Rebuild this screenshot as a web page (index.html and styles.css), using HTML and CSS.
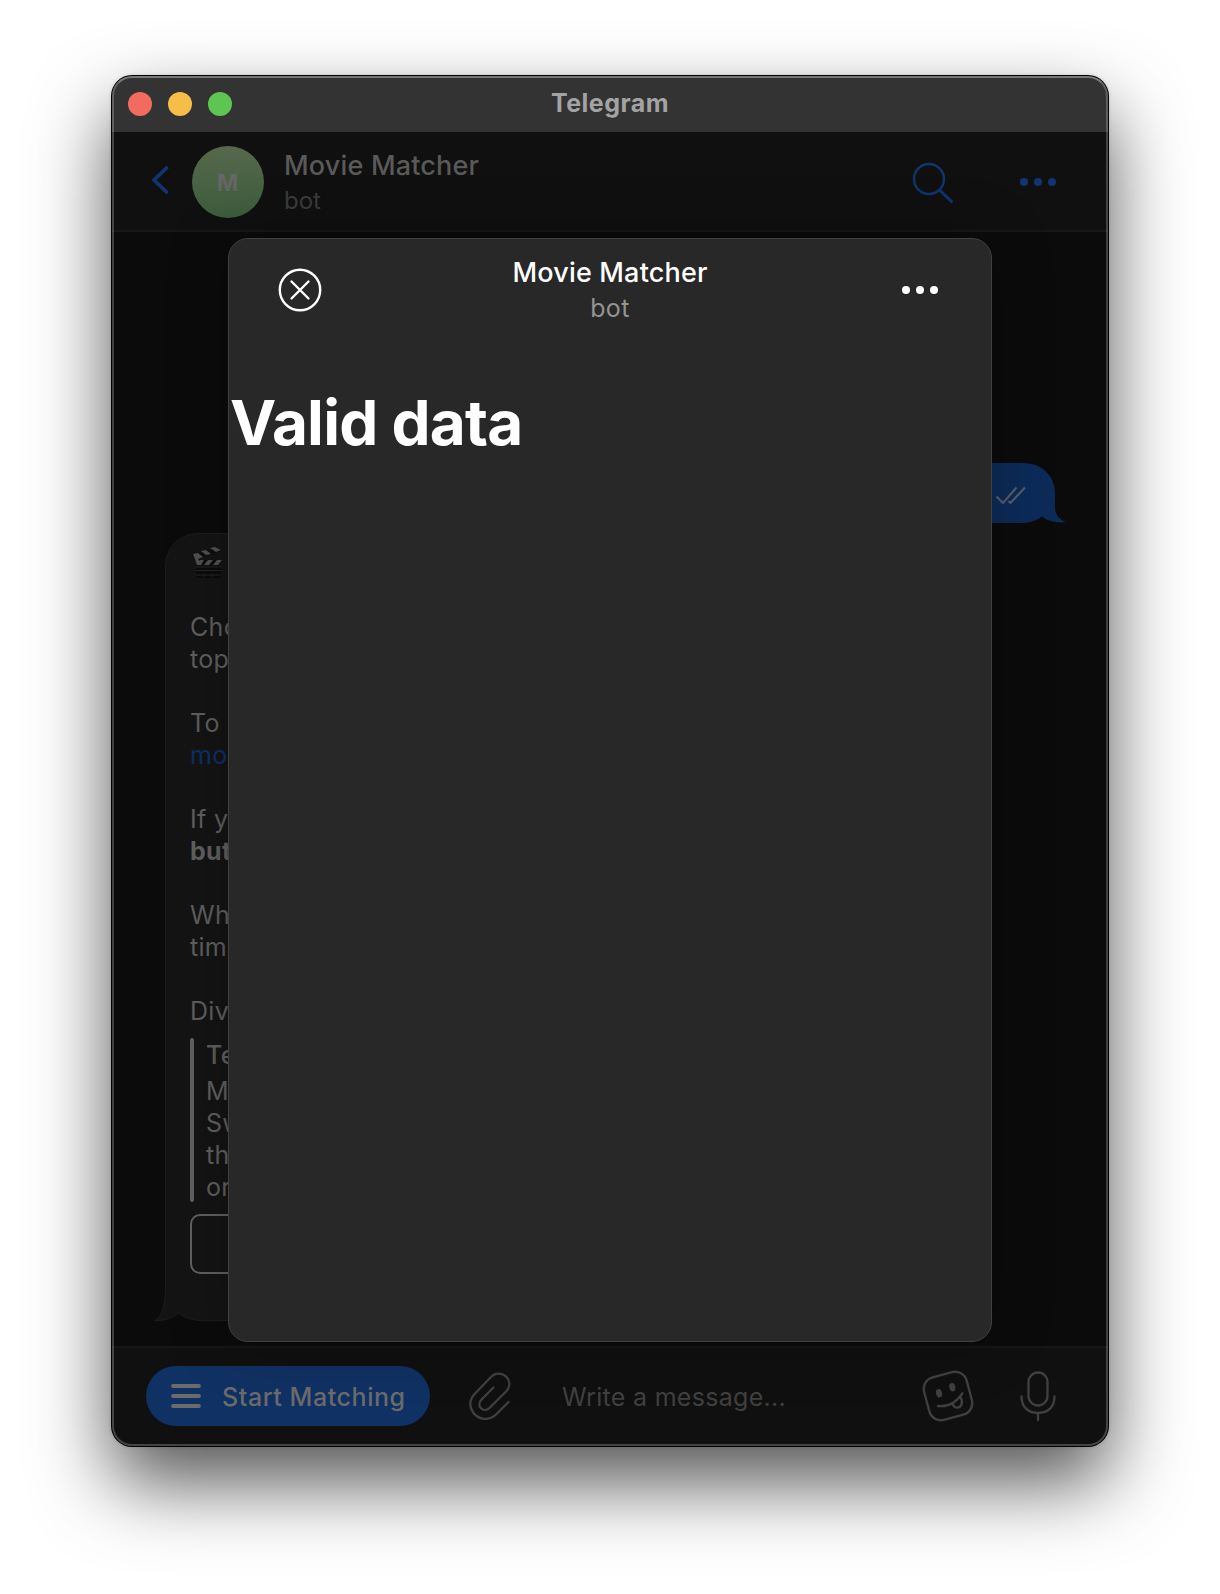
FILE: index.html
```html
<!DOCTYPE html>
<html lang="en">
<head>
<meta charset="utf-8">
<title>Telegram</title>
<link rel="stylesheet" href="styles.css">
</head>
<body>
<div class="window">
  <header class="titlebar">
    <div class="lights"><i class="light red"></i><i class="light yellow"></i><i class="light green"></i></div>
    <div class="window-title">Telegram</div>
  </header>

  <div class="chat-header">
    <svg class="back" width="18" height="30" viewBox="0 0 18 30"><path d="M15.500 3 3 15 15.500 27"/></svg>
    <div class="avatar">M</div>
    <div class="peer">
      <div class="peer-name">Movie Matcher</div>
      <div class="peer-status">bot</div>
    </div>
    <svg class="search" width="42" height="42" viewBox="0 0 42 42"><circle cx="17" cy="17" r="15" stroke-width="2.4"/><path d="M28 28.500 39.500 39.500" stroke-width="3"/></svg>
    <svg class="dots" width="36" height="8" viewBox="0 0 36 8"><circle cx="4" cy="4" r="4"/><circle cx="18" cy="4" r="4"/><circle cx="32" cy="4" r="4"/></svg>
  </div>

  <main class="messages">
    <div class="message-out">
      <svg class="out-shape" width="150" height="60" viewBox="0 0 150 60"><path d="M0 0H107C126 0 139 13 139 30V45C139 52 144 57 150 59C141 60.500 131 58 126 53.500C120 58 113 60 105 60H0Z"/></svg>
      <svg class="checks" width="32" height="20" viewBox="0 0 32 20"><path d="M1.500 10.500 8 17 21.500 1.500M13.500 15 15.500 17 30 1.500"/></svg>
    </div>
    <div class="message-in">
      <svg class="in-shape" width="120" height="789" viewBox="0 0 120 789"><path d="M119 .500H46C26 .500 12.500 15 12.500 34V752C12.500 774 9 783 1.500 787.500C10 788 18 786 25 780C32 785 40 787.500 50 787.500H119Z"/></svg>
      <div class="text">
        <div class="line"><svg class="clapper" width="32" height="32" viewBox="0 0 32 32">
          <path d="M4 19.500H29V30Q29 31 28 31H5Q4 31 4 30Z" fill="#0b0b0b"/><path d="M4 20H29M4 23.500H29M4 28H29M12 28V30M20 28V30" stroke="#262626" stroke-width="1"/>
          <path d="M4 13H30L27 18.500H4Z" fill="#0d0d0d"/>
          <path d="M1 8 26 0 29 4 5 12Z" fill="#0d0d0d"/>
          <path d="M1 7 6 6 11 10 6 12 8 15 5 18 3 12ZM9 4 14 3 19 7 14 8ZM18 1 23 0 29 3 24 5ZM5 18 8 13H12L9 18ZM12 18 16 13H21L17 18ZM21 18 25 13H30L26 18Z" fill="#505050"/>
        </svg></div>
        <div class="line"></div>
        <div class="line">Cho</div>
        <div class="line">top</div>
        <div class="line"></div>
        <div class="line">To</div>
        <div class="line link">mo</div>
        <div class="line"></div>
        <div class="line">If y</div>
        <div class="line bold">but</div>
        <div class="line"></div>
        <div class="line">Wh</div>
        <div class="line">tim</div>
        <div class="line"></div>
        <div class="line">Div</div>
      </div>
      <div class="quote">
        <div class="line quote-title">Te</div>
        <div class="line">M</div>
        <div class="line">Sw</div>
        <div class="line">th</div>
        <div class="line">or</div>
      </div>
      <div class="inline-button"></div>
    </div>
  </main>

  <footer class="composer">
    <div class="menu-button">
      <svg width="30" height="24" viewBox="0 0 30 24"><path d="M2 2H28M2 12H28M2 22H28"/></svg>
      <span>Start Matching</span>
    </div>
    <svg class="tool clip" width="42" height="48" viewBox="0 0 42 48"><path d="M39.500 30 27 42.500C20 49 10 48 4.500 41C-.500 34 1 27 6 21.500L21.500 5.500C26 .500 33 .500 37.500 5C41.500 9.500 41 15 37.500 19L20.500 36C14.500 41.500 6.500 34 12.500 27.500L24.500 15.500"/></svg>
    <div class="placeholder">Write a message...</div>
    <svg class="tool sticker" width="52" height="52" viewBox="0 0 52 52">
      <rect x="4" y="4" width="44" height="44" rx="12" transform="rotate(-15 26 26)"/>
      <path d="M16 36C26 37 34 33 40.300 23.300M30.700 33.800C32 39 37.500 38.500 39.300 35C40.500 32 40 29.500 38.500 27"/>
      <ellipse class="eye" cx="17" cy="23.300" rx="3" ry="4.200" transform="rotate(-15 17 23.300)"/>
      <ellipse class="eye" cx="30.300" cy="17.300" rx="3" ry="4.200" transform="rotate(-15 30.300 17.300)"/>
    </svg>
    <svg class="tool mic" width="38" height="52" viewBox="0 0 38 52"><rect x="9.500" y="2.500" width="19" height="33" rx="9.500"/><path d="M2.500 26.500C2.500 37 9 43 19 43S35.500 37 35.500 26.500M19 43V50"/></svg>
  </footer>

  <section class="modal">
    <div class="modal-header">
      <svg class="close" width="44" height="44" viewBox="0 0 44 44"><circle cx="22" cy="22" r="20.200"/><path d="M13.500 13.500 30.500 30.500M30.500 13.500 13.500 30.500"/></svg>
      <div class="modal-peer">
        <div class="modal-name">Movie Matcher</div>
        <div class="modal-status">bot</div>
      </div>
      <svg class="dots white" width="36" height="8" viewBox="0 0 36 8"><circle cx="4" cy="4" r="4"/><circle cx="18" cy="4" r="4"/><circle cx="32" cy="4" r="4"/></svg>
    </div>
    <h1>Valid data</h1>
  </section>
</div>
</body>
</html>
```
FILE: styles.css
```css
* { box-sizing: border-box; }
body { margin: 0; padding: 76px 112px 148px; background: #fff; font-family: Inter, "Liberation Sans", sans-serif; overflow: hidden; }
svg { display: block; flex: none; fill: none; stroke-linecap: round; stroke-linejoin: round; }

.window { position: relative; display: flex; flex-direction: column; width: 996px; height: 1370px; border-radius: 20px; background: #0b0b0b; box-shadow: 0 0 0 1px #000, 0 0 4px rgba(0,0,0,.2), 0 36px 78px rgba(0,0,0,.68); }
/* light rim that macOS draws just inside the window edge */
.window::after { content: ""; position: absolute; inset: 0; border: 2px solid rgba(255,255,255,.22); border-top-color: rgba(255,255,255,.34); border-radius: 20px; pointer-events: none; }

.titlebar { display: grid; grid-template-columns: 1fr auto 1fr; align-items: center; height: 56px; padding: 0 16px; background: #333; border-radius: 20px 20px 0 0; }
.lights { display: flex; gap: 16px; }
.light { width: 24px; height: 24px; border-radius: 50%; }
.red { background: #f16b5e; }
.yellow { background: #f6be48; }
.green { background: #5fc552; }
.window-title { color: #a3a3a3; font-size: 25px; font-weight: 700; line-height: 32px; letter-spacing: .45px; padding-bottom: 2px; }

.chat-header { display: flex; align-items: center; height: 100px; padding: 0 52px 0 39px; background: #101010; border-bottom: 2px solid #171717; }
.back { stroke: #10356f; stroke-width: 3.8; margin: 0 23px 3px 0; }
.avatar { width: 72px; height: 72px; margin: 2px 20px 0 0; border-radius: 50%; background: linear-gradient(#57684c, #3c5d3c); color: #666; font-size: 23px; font-weight: 700; line-height: 74px; text-align: center; text-indent: -1px; }
.peer { flex: 1; padding-top: 2px; }
.peer-name { color: #595959; font-size: 27px; font-weight: 500; line-height: 36px; letter-spacing: .18px; }
.peer-status { color: #3b3b3b; font-size: 24px; line-height: 32px; margin-top: 1px; }
.search { stroke: #10356f; margin-right: 66px; margin-top: 3px; }
.dots { fill: #10356f; margin-top: 2px; }
.dots.white { fill: #fff; }

.messages { display: flex; flex-direction: column; height: 1114px; padding-top: 231px; }
.message-out { position: relative; align-self: flex-end; width: 150px; height: 60px; margin-right: 42px; padding: 23px 0 0 79px; }
.out-shape { position: absolute; inset: 0; fill: #0c2b59; }
.checks { position: relative; stroke: #555d68; stroke-width: 2.2; stroke-linecap: butt; stroke-linejoin: miter; }
.message-in { position: relative; align-self: flex-start; width: 120px; height: 789px; margin: 10px 0 0 41px; padding: 14px 0 0 37px; overflow: hidden; }
.in-shape { position: absolute; inset: 0; fill: #141414; stroke: #1d1d1d; }
.text, .quote, .inline-button { position: relative; }
.line { height: 32px; color: #5f5f5f; font-size: 25px; line-height: 32px; letter-spacing: .3px; white-space: nowrap; }
.link { color: #0f2f65; }
.bold { font-weight: 700; }
.clapper { margin-left: 2px; }
.quote { height: 164px; margin-top: 11px; padding: 1px 0 0 16px; }
.quote::before { content: ""; position: absolute; left: 0; top: 0; width: 4px; height: 164px; border-radius: 2px; background: #606060; }
.quote-title { font-weight: 500; margin-bottom: 4px; }
.inline-button { width: 120px; height: 60px; margin-top: 12px; border: 2px solid #606060; border-radius: 10px; }

.composer { display: flex; align-items: center; height: 100px; padding: 0 51px 2px 34px; background: #101010; border-top: 2px solid #171717; border-radius: 0 0 20px 20px; }
.menu-button { display: flex; align-items: center; gap: 21px; width: 284px; height: 60px; margin-right: 39px; padding-left: 25px; border-radius: 30px; background: #103163; color: #6b6b6b; font-size: 25px; font-weight: 500; letter-spacing: .56px; white-space: nowrap; }
.menu-button span { padding-top: 1px; }
.menu-button svg { stroke: #6b6b6b; stroke-width: 3.8; }
.tool { stroke: #404040; stroke-width: 2.3; }
.placeholder { flex: 1; margin-left: 51px; padding-top: 2px; color: #404040; font-size: 25px; line-height: 32px; letter-spacing: .3px; }
.sticker { margin-right: 45px; }
.eye { fill: #404040; stroke: none; }

.modal { position: absolute; left: 116px; top: 162px; width: 764px; height: 1104px; border: 1px solid #404040; border-radius: 20px; background: #282828; box-shadow: 0 0 60px rgba(0,0,0,.25); }
.modal-header { display: grid; grid-template-columns: 1fr auto 1fr; height: 102px; padding: 0 53px 0 49px; align-items: center; }
.close { stroke: #fff; stroke-width: 2.4; }
.modal-peer { text-align: center; padding: 0 0 1px 4px; }
.modal-name { color: #fff; font-size: 27px; font-weight: 500; line-height: 36px; letter-spacing: .18px; }
.modal-status { color: #939393; font-size: 25px; line-height: 32px; letter-spacing: .4px; margin-top: 1px; }
.modal-header .dots { justify-self: end; margin-top: 0; }
h1 { margin: 42px 0 0 1px; color: #fff; font-size: 62px; font-weight: 700; line-height: 80px; letter-spacing: -.75px; }
```
